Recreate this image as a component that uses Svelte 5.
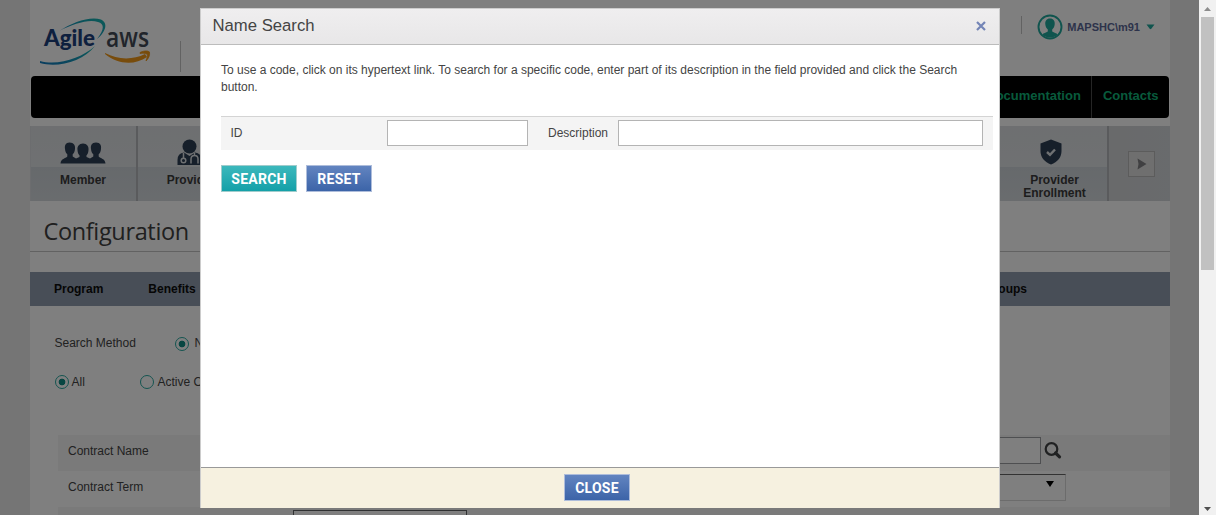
<script>
  const modules = [
    { name: 'Member', icon: 'people' },
    { name: 'Provider', icon: 'doctor' },
    { name: 'Provider Enrollment', icon: 'shield' }
  ];
</script>

<div class="screen">
  <div class="page">
    <main class="sheet">
      <header>
        <svg class="logo" width="116" height="50" viewBox="0 0 116 50">
          <defs>
            <linearGradient id="swoosh" x1="0" y1="1" x2="1" y2="0">
              <stop offset="0" stop-color="#147ac0" />
              <stop offset="1" stop-color="#18b8b0" />
            </linearGradient>
          </defs>
          <path d="M19 14C33 5 50-1 61 2.500C69 6 65 16 57 22C64 13 65 7 58 5C48 2 34 7 19 14Z" fill="url(#swoosh)" />
          <path d="M0 44C18 49 42 41 55 29C43 45 17 51 0 46Z" fill="url(#swoosh)" />
          <text class="agile" x="4" y="29" textLength="51" lengthAdjust="spacingAndGlyphs">Agile</text>
          <text class="aws" x="66" y="30" textLength="43" lengthAdjust="spacingAndGlyphs">aws</text>
          <path d="M65 36C78 43 93 43 105 37L107 40C94 49 77 47 65 37Z" fill="#f09818" />
          <path d="M100 35.500C104 33.500 108 33.500 109.500 35C110 38 109 41 106 44C107 41 108 38 107 37C105 36 103 36 100 36.500Z" fill="#f09818" stroke="#f09818" stroke-width=".8" />
        </svg>
        <span class="rule logo-rule"></span>
        <div class="user">
          <span class="rule user-rule"></span>
          <svg width="26" height="26" viewBox="0 0 26 26">
            <circle cx="13" cy="13" r="11.500" fill="none" stroke="#20a89c" stroke-width="1.900" />
            <path d="M13 4.500C9.500 4.500 8 7 8.300 10.300C8.500 12.800 9.600 14.500 10.800 15.400V17.500C9 18.700 6.500 19 5.300 20.500C9 24.500 17 24.500 20.700 20.500C19.500 19 17 18.700 15.200 17.500V15.400C16.400 14.500 17.500 12.800 17.700 10.300C18 7 16.500 4.500 13 4.500Z" fill="#20a89c" />
          </svg>
          <b>MAPSHC\m91</b>
          <svg class="caret" width="9" height="6" viewBox="0 0 9 6"><path d="M.5.500H8.500L5.300 4.800Q4.500 5.500 3.700 4.800Z" fill="#20a89c" /></svg>
        </div>
      </header>

      <nav class="black"><b>Documentation</b><b>Contacts</b></nav>

      <div class="modules">
        {#each modules as m}
          <div class="module" class:first={m.icon === 'people'} class:last={m.icon === 'shield'}>
            {#if m.icon === 'people'}
              <svg width="46" height="24" viewBox="0 0 46 24" fill="#2c3e54">
                <path d="M9.500 1.500C5.500 1.500 4.500 4.500 5 8C5.300 11 6.300 12.500 7.300 13.300V15.500C5.500 17.500 1 17.500.5 22.500H45.500C45 17.500 40.500 17.500 38.700 15.500V13.300C39.700 12.500 40.700 11 41 8C41.500 4.500 40.500 1.500 36 1.500C31.500 1.500 30.500 4.500 31 8C31.300 11 32.300 12.500 33.300 13.300V15.500L30 17.500L26.500 16V14.300C27.500 13.500 28.300 12 28.500 9C29 5.500 27 2.500 23 2.500C19 2.500 17 5.500 17.500 9C17.700 12 18.500 13.500 19.500 14.300V16L16 17.500L12.700 15.500V13.300C13.700 12.500 14.700 11 15 8C15.500 4.500 14 1.500 9.500 1.500Z" />
              </svg>
            {:else if m.icon === 'doctor'}
              <svg class="doc" width="27" height="27" viewBox="0 0 27 27">
                <circle cx="13.500" cy="7.500" r="7" fill="#2c3e54" />
                <path d="M1.500 26V21Q1.500 14 8 13.500L13.500 17L19 13.500Q25.500 14 25.500 21V26Z" fill="#2c3e54" />
                <path d="M7.500 14V19M18.500 14V16.500M15 24.500V20Q15 16.500 18.500 16.500T22 20V24.500" fill="none" stroke="#dde1e5" stroke-width="1.500" />
                <circle cx="7.500" cy="21.500" r="2.300" fill="none" stroke="#dde1e5" stroke-width="1.500" />
              </svg>
            {:else}
              <svg class="shield" width="22" height="26" viewBox="0 0 22 26">
                <path d="M11 .5L21.500 4.500V12C21.500 18.500 17.500 23 11 25.500C4.500 23 .5 18.500.5 12V4.500Z" fill="#2c3e54" />
                <path d="M7 13L10 15.800L15 10.500" fill="none" stroke="#dde1e5" stroke-width="2.400" />
              </svg>
            {/if}
            <b>{m.name}</b>
          </div>
        {/each}
        <div class="more"><span><svg width="10" height="12" viewBox="0 0 10 12"><path d="M.5.500L9.500 6L.5 11.500L1.500 6Z" fill="#808084" /></svg></span></div>
      </div>

      <h1>Configuration</h1>
      <nav class="tabs"><b>Program</b><b>Benefits</b><b class="groups">Groups</b></nav>

      <div class="choices">
        <span class="method">Search Method</span><i class="radio on"></i><span>Name</span>
      </div>
      <div class="choices second">
        <i class="radio on"></i><span class="all">All</span><i class="radio"></i><span>Active Only</span>
      </div>

      <div class="row shade">
        <span>Contract Name</span>
        <div class="field"></div>
        <svg class="lens" width="18" height="18" viewBox="0 0 18 18" fill="none" stroke="#404244"><circle cx="7.500" cy="7" r="5.800" stroke-width="2.200" /><path d="M11.500 11L15.500 14.800" stroke-width="3.200" stroke-linecap="round" /></svg>
      </div>
      <div class="row">
        <span>Contract Term</span>
        <div class="field select"><svg width="8" height="6" viewBox="0 0 8 6"><path d="M0 0H8L4 6Z" /></svg></div>
      </div>
      <div class="row shade third"><div class="field"></div></div>
    </main>
  </div>

  <aside class="scroll">
    <svg width="7" height="4" viewBox="0 0 7 4"><path d="M0 4L3.500 0L7 4Z" fill="#8c8c8c" /></svg>
    <div class="thumb"></div>
    <svg width="7" height="4" viewBox="0 0 7 4"><path d="M0 0H7L3.500 4Z" fill="#505050" /></svg>
  </aside>

  <div class="backdrop">
    <section class="modal">
      <div class="head">
        <h2>Name Search</h2>
        <svg width="10" height="10" viewBox="0 0 10 10"><path d="M1 1L9 9M9 1L1 9" stroke="#7384b6" stroke-width="2.200" /></svg>
      </div>
      <div class="body">
        <p>To use a code, click on its hypertext link. To search for a specific code, enter part of its description in the field provided and click the Search button.</p>
        <div class="form">
          <label for="code-id">ID</label><input id="code-id" class="id" />
          <label for="code-desc">Description</label><input id="code-desc" class="desc" />
        </div>
        <div class="actions">
          <button class="teal">SEARCH</button><button>RESET</button>
        </div>
      </div>
      <div class="foot"><button>CLOSE</button></div>
    </section>
  </div>
</div>

<style>
  :global(body) { overflow: hidden; }
  * { box-sizing: border-box; }
  svg { display: block; flex: none; }
  .screen {
    position: relative; display: flex; width: 1216px; height: 515px; overflow: hidden;
    font: 12px/17px "Liberation Sans", Arial, sans-serif; color: #444;
  }
  .page { width: 1199px; height: 515px; overflow: hidden; padding: 0 29px 0 30px; background: #ebebeb; }
  .sheet { width: 1140px; height: 515px; overflow: hidden; background: #fff; }

  header { display: flex; align-items: flex-start; height: 76px; padding-left: 10px; }
  .logo { margin-top: 17px; }
  .agile { font: 900 22px Lato, sans-serif; fill: #1c407c; }
  .aws { font: 600 27px "Open Sans", sans-serif; fill: #434a56; }
  .rule { width: 1px; background: #c4c4c4; }
  .logo-rule { height: 31px; margin: 41px 0 0 24px; }
  .user { display: flex; align-items: center; margin: 14px 15px 0 auto; font-size: 11px; color: #5b6796; }
  .user-rule { height: 18px; margin: -4px 15px 0 0; }
  .user b { margin: 0 6px 0 4px; }

  .black { display: flex; justify-content: flex-end; height: 42px; margin: 0 1px; border-radius: 4px; background: #000; color: #10b478; font-size: 13px; line-height: 39px; }
  .black b { padding: 0 10.500px; }
  .black b + b { border-left: 1px solid #4a4a4a; }

  .modules { display: flex; height: 75px; margin-top: 8px; padding-left: 1px; background: #d8dade; color: #3a3a3a; }
  .module { display: flex; flex: none; flex-direction: column; align-items: center; width: 107px; padding: 16px 4px 0 5px; border-right: 2px solid #b4b6ba; background: linear-gradient(#dcdfe2, #dfe2e5 41px, #cdd3d8 41px, #d4d9dd); text-align: center; line-height: 13px; }
  .module.first { padding: 15px 5px 0 4px; }
  .module b { margin-top: 9px; }
  .doc { margin: -3px 4px -1px 0; }
  .shield { margin: -3px 7px -2px 0; }
  .shield + b { margin-top: 11px; }
  .last { width: 109px; margin-left: auto; padding: 16px 12px 0 14px; }
  .more { display: flex; flex: none; align-items: center; justify-content: center; width: 61px; padding-left: 4px; background: linear-gradient(90deg, #d2d4d6, #d2d6da); }
  .more span { display: grid; place-items: center; width: 27px; height: 26px; border: 1px solid #b8b8b8; background: #dedede; }

  h1 { height: 51px; margin: 0; padding: 13px 0 0 13.500px; border-bottom: 1px solid #c4c4c4; font: 400 23.500px/34px "Open Sans", sans-serif; letter-spacing: -.35px; color: #404040; }
  .tabs { display: flex; height: 34px; margin-top: 20px; padding-left: 24px; background: #909cae; color: #0c0c0c; line-height: 35px; }
  .tabs b + b { margin-left: 45px; }
  .tabs .groups { margin: 0 143px 0 auto; }

  .choices { display: flex; align-items: center; height: 18px; margin: 28px 0 0 24.500px; }
  .second { margin-top: 21px; }
  .method { width: 120px; }
  .all { width: 68px; }
  .radio { width: 14px; height: 14px; margin-right: 3px; border: 1px solid #28a8a0; border-radius: 50%; }
  .all + .radio { margin-right: 4px; }
  .method + .radio { margin: 2px 6px 0 0; }
  .radio.on { background: radial-gradient(circle, #108c84 3px, transparent 3.700px); }

  .row { display: flex; align-items: flex-start; height: 36px; margin-left: 28px; padding: 8px 0 0 10px; }
  .second + .row { margin-top: 44px; }
  .shade { background: #f4f4f4; }
  .field { width: 160px; height: 27px; margin: -6px 0 0 auto; border: 1px solid #9c9ea2; background: #fff; }
  .lens { margin: -1px 108px 0 3px; }
  .row .field:last-child { margin-right: 104px; }
  .field.select { display: flex; justify-content: flex-end; margin-top: -5px; padding: 6px 11px; border-color: #666 #d8d8d8 #d8d8d8; }
  .third .field:last-child { width: 174px; margin: -5px 0 0 225px; border-color: #606264; }

  .scroll { display: flex; flex-direction: column; align-items: center; width: 17px; padding: 7px 0 4px; background: #f1f1f1; }
  .thumb { width: 13px; height: 253px; margin: 6px 0 auto; background: #c1c1c1; }

  .backdrop { position: absolute; top: 0; left: 0; width: 1199px; height: 515px; padding: 8px 0 0 200px; background: rgba(0, 0, 0, .5); }
  .modal { display: flex; flex-direction: column; width: 800px; height: 500px; border: 1px solid #ccc; border-bottom: 0; background: #fff; }
  .head { display: flex; align-items: center; justify-content: space-between; height: 36px; padding: 0 13px 0 11.500px; border-bottom: 1px solid #bcbcbc; background: linear-gradient(#efeeef, #e8e7e8); }
  .head svg { margin-top: -2px; }
  h2 { margin: -1px 0 0; font: 400 16.700px/30px "Liberation Sans", Arial, sans-serif; color: #444; }
  .body { flex: 1; padding: 17px 6px 0 20px; }
  p { margin: 0; padding-right: 30px; }
  .form { display: flex; align-items: center; height: 34px; margin-top: 20px; padding: 0 10px 0 9.500px; border-top: 1px solid #d4d4d4; background: #f4f4f4; }
  label { width: 156.500px; }
  .id + label { width: 90px; padding-left: 20px; }
  input { height: 26px; margin: -1px 0 0; border: 1px solid #b4b4b4; border-radius: 0; background: #fff; }
  .id { width: 141px; }
  .desc { width: 365px; }
  .actions { display: flex; gap: 9px; margin-top: 15px; }
  button { width: 66px; height: 27px; padding: 1px 0 0; border: 1px solid #aebddb; background: linear-gradient(#6284c0, #3c64a8); font: 700 14px/20px Roboto, sans-serif; letter-spacing: .25px; color: #fff; }
  .teal { width: 76px; border-color: #a0cccc; background: linear-gradient(#3cb8bc, #14a0a8); }
  .foot { display: flex; justify-content: center; height: 41px; padding: 6px 6px 0 0; border-top: 1px solid #999; background: #f6f1e0; }
</style>
